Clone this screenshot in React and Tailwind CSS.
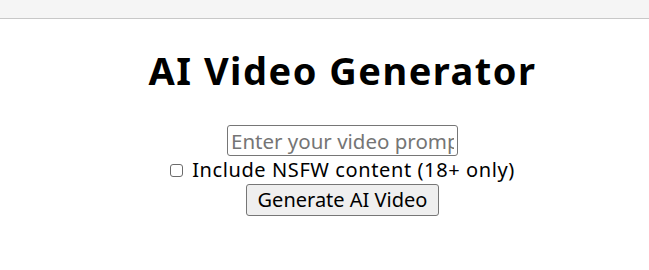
export default function App() {
  return (
    <div className="min-h-[270px] bg-white">
      <div className="h-[19px] bg-[#f5f5f5] border-b border-[#c8c8c8]" />
      <div className="flex flex-col items-center pl-[36px] font-['Noto_Sans',sans-serif] text-black">
        <h1 className="mt-[29px] text-[38px] leading-[44px] font-bold tracking-[1.5px]">AI Video Generator</h1>
        <input
          type="text"
          placeholder="Enter your video prompt"
          className="block mt-[33px] w-[231px] h-[31px] border border-[#767676] rounded-[3px] px-[3px] text-[20.5px] placeholder:text-[#757575] outline-none"
        />
        <label className="flex items-center h-[28px] text-[20px] leading-[28px] tracking-[0.6px]">
          <input type="checkbox" className="w-[13px] h-[13px] mr-[9px] appearance-none border border-[#6b6b6b] rounded-[3px] bg-white" />
          Include NSFW content (18+ only)
        </label>
        <button className="block h-[32px] px-[11px] bg-[#efefef] border border-[#767676] rounded-[3px] text-[20px] leading-none">
          Generate AI Video
        </button>
      </div>
    </div>
  );
}
